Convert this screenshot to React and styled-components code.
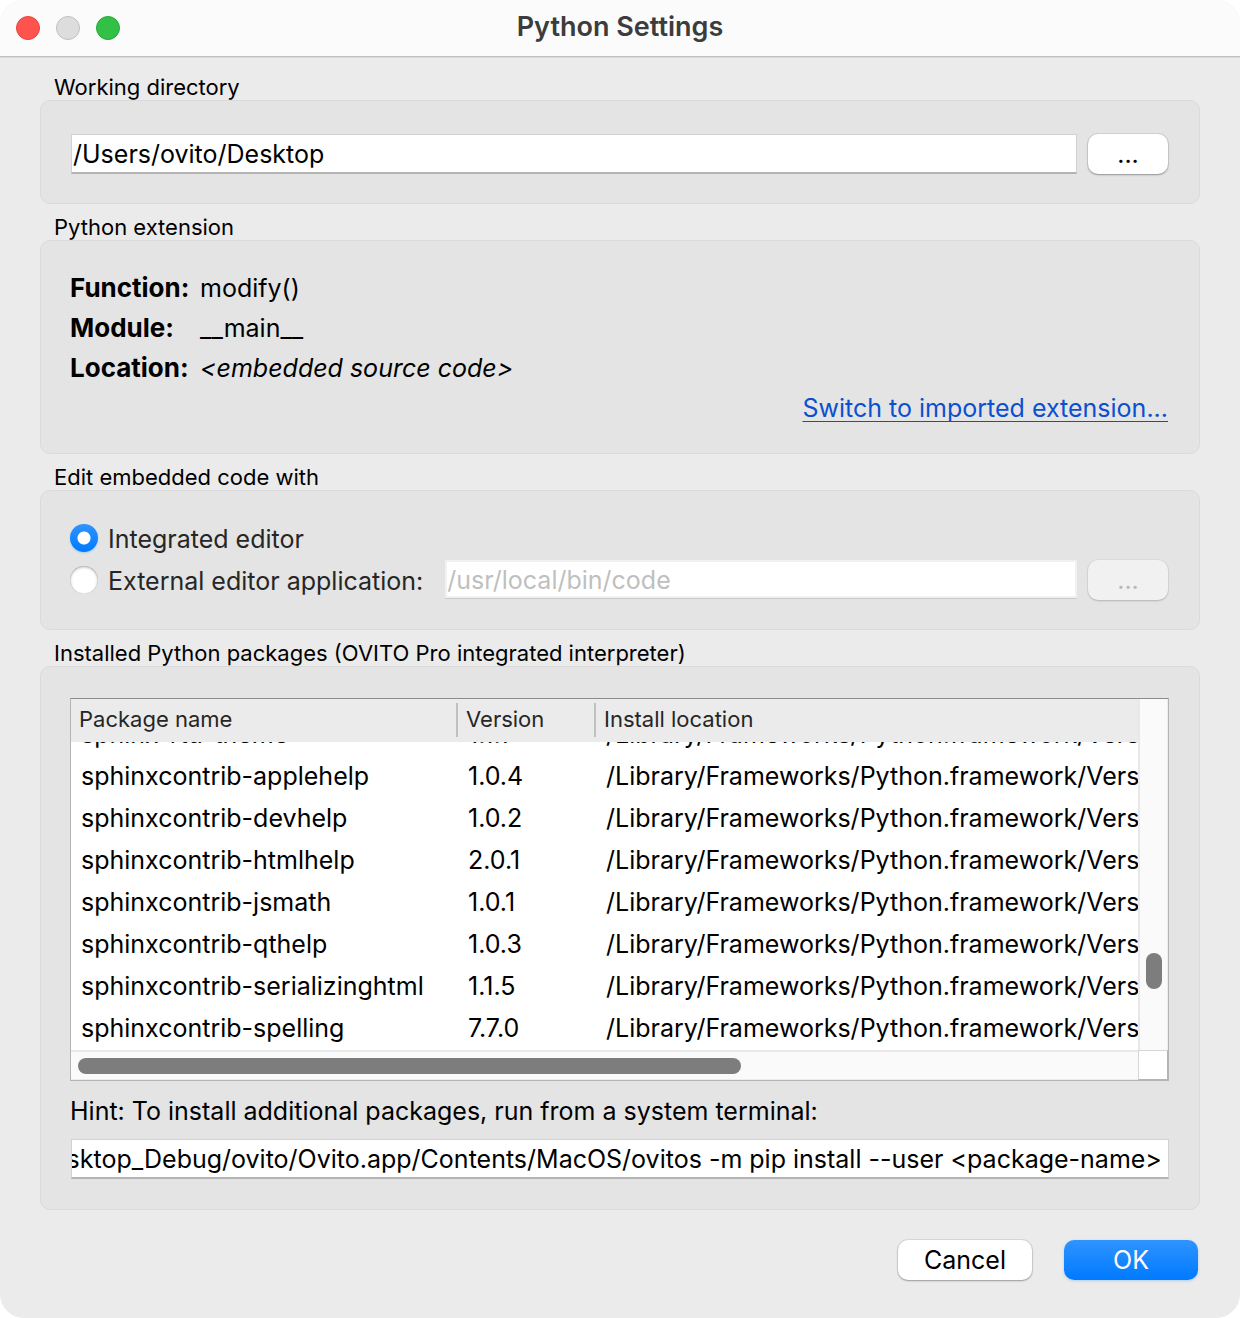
import React, { useLayoutEffect, useRef, useState } from "react";
import styled, { createGlobalStyle, css } from "styled-components";

const GlobalStyle = createGlobalStyle`
  *, *::before, *::after { box-sizing: border-box; }
  body {
    margin: 0;
    background: #ffffff;
    color: #000000;
    font-family: Inter, "Liberation Sans", sans-serif;
    font-size: 25px;
    line-height: 40px;
  }
  input, button { font: inherit; color: inherit; }
`;

const Window = styled.div`
  display: flex;
  flex-direction: column;
  min-height: 100vh;
  border-radius: 24px;
  overflow: hidden;
  background: #ebebeb;
`;

const TitleBar = styled.header`
  display: grid;
  grid-template-columns: 1fr auto 1fr;
  align-items: center;
  height: 58px;
  padding: 0 16px 2px;
  background: #fbfbfb;
  border-bottom: 1px solid #d9d9d9;
  box-shadow: inset 0 -1px 0 #c0c0c0;
`;

const Lights = styled.div`
  display: flex;
  gap: 16px;
`;

const Light = styled.button`
  width: 24px;
  height: 24px;
  padding: 0;
  border: 1px solid ${(p) => p.$edge};
  border-radius: 50%;
  background: ${(p) => p.$fill};
`;

const Title = styled.h1`
  margin: 0;
  padding-bottom: 2px;
  font-size: 27px;
  line-height: 32px;
  font-weight: 600;
  color: #3c3c3c;
`;

const Content = styled.form`
  display: flex;
  flex-direction: column;
  gap: 10px;
  padding: 16px 40px 38px;
`;

const Group = styled.section`
  display: flex;
  flex-direction: column;
`;

const GroupTitle = styled.h2`
  margin: 0;
  padding: 0 14px;
  font-size: 22px;
  line-height: 26px;
  font-weight: 400;
`;

const Panel = styled.div`
  display: flex;
  flex-direction: column;
  padding: ${(p) => p.$top}px ${(p) => p.$right || 31}px ${(p) => p.$bottom}px 29px;
  border: 1px solid #dadada;
  border-radius: 10px;
  background: #e4e4e4;
`;

const Row = styled.div`
  display: flex;
  align-items: center;
  gap: 11px;
  height: 40px;
  margin-top: ${(p) => p.$top || 0}px;
`;

const TextField = styled.input`
  flex: 1;
  min-width: 0;
  height: 40px;
  margin-left: 1px;
  padding: 0 2px 0 1px;
  border: 1px solid #d2d2d2;
  border-bottom: 2px solid #b4b4b4;
  border-radius: 0;
  outline: none;
  background: #ffffff;
  text-overflow: clip;
  ${(p) =>
    p.disabled &&
    css`
      height: 38px;
      margin-bottom: 2px;
      padding: 2px 0 0;
      border: 2px solid #f1f1f1;
      box-shadow: 0 1px 0 #c8c8c8;
      color: #bfbfbf;
    `}
`;

const CommandField = styled(TextField)`
  flex: none;
  padding: 0 6px 0 0;
`;

const PushButton = styled.button`
  flex: none;
  width: ${(p) => p.$width}px;
  height: 40px;
  padding: 0;
  border: 0;
  border-radius: 10px;
  background: ${(p) => (p.$primary ? "linear-gradient(#2f94ff, #007aff)" : "#ffffff")};
  color: ${(p) => (p.$primary ? "#ffffff" : "#000000")};
  box-shadow: ${(p) =>
    p.$primary
      ? "0 1px 3px rgba(0, 122, 255, 0.25)"
      : "0 0 0 1px rgba(0, 0, 0, 0.07), 0 1px 2px rgba(0, 0, 0, 0.3)"};
  line-height: 38px;
  &:disabled {
    background: #f1f1f1;
    color: #b9b9b9;
    box-shadow: 0 0 0 1px rgba(0, 0, 0, 0.03), 0 1px 2px rgba(0, 0, 0, 0.18);
  }
`;

const Facts = styled.dl`
  display: grid;
  grid-template-columns: 130px 1fr;
  margin: 0;
`;

const Term = styled.dt`
  font-size: 26px;
  font-weight: 700;
`;

const Value = styled.dd`
  margin: 0;
  font-style: ${(p) => (p.$italic ? "italic" : "normal")};
`;

const SwitchLink = styled.a`
  align-self: flex-end;
  color: #0a50d0;
  text-decoration: underline;
  text-decoration-thickness: 1px;
  text-underline-offset: 4px;
  text-decoration-skip-ink: none;
`;

const Radio = styled.input`
  appearance: none;
  flex: none;
  width: 28px;
  height: 28px;
  margin: 0;
  border-radius: 50%;
  background: #ffffff;
  box-shadow: inset 0 1px 3px rgba(0, 0, 0, 0.3), inset 0 0 1px rgba(0, 0, 0, 0.3);
  &:checked {
    background: radial-gradient(circle, #ffffff 6px, transparent 7px),
      linear-gradient(#2f94ff, #007aff);
    box-shadow: 0 1px 2px rgba(0, 122, 255, 0.25);
  }
`;

const RadioLabel = styled.label`
  display: flex;
  align-items: center;
  gap: 10px;
  margin-right: 10px;
  color: #262626;
  white-space: nowrap;
`;

const RadioText = styled.span`
  padding-top: 2px;
`;

const Browser = styled.div`
  display: grid;
  grid-template-columns: minmax(0, 1fr) 30px;
  grid-template-rows: 351px 30px;
  border: 1px solid #b4b4b4;
  border-top-color: #8c8c8c;
  background: #ffffff;
`;

const Viewport = styled.div`
  overflow: hidden;
`;

const Table = styled.table`
  width: 100%;
  table-layout: fixed;
  border-collapse: separate;
  border-spacing: 0;
`;

const Column = styled.col`
  width: ${(p) => p.$width};
`;

const HeadCell = styled.th`
  position: sticky;
  top: 0;
  height: 43px;
  padding: 0;
  background: #ebebeb;
  color: #262626;
  font-size: 22px;
  font-weight: 400;
  text-align: left;
`;

const HeadLabel = styled.div`
  height: 34px;
  margin-bottom: 2px;
  padding-left: 8px;
  border-right: ${(p) => (p.$last ? "none" : "2px solid #c0c0c0")};
  line-height: 32px;
`;

const Cell = styled.td`
  height: 42px;
  padding: 0 0 2px 10px;
  white-space: nowrap;
`;

const VerticalTrack = styled.div`
  display: flex;
  flex-direction: column;
  justify-content: flex-end;
  align-items: center;
  padding-bottom: 61px;
  border-left: 2px solid #e8e8e8;
  border-right: 1px solid #ededed;
  background: #fafafa;
`;

const HorizontalTrack = styled.div`
  display: flex;
  align-items: center;
  padding: 0 7px;
  border-top: 2px solid #e8e8e8;
  border-bottom: 1px solid #ededed;
  background: #fafafa;
`;

const Thumb = styled.div`
  width: ${(p) => p.$width};
  height: ${(p) => p.$height};
  border-radius: 8px;
  background: #7d7d7d;
`;

const Corner = styled.div`
  border-top: 1px solid #d6d6d6;
  border-left: 1px solid #d6d6d6;
  border-right: 1px solid #b4b4b4;
  border-bottom: 1px solid #b4b4b4;
`;

const Hint = styled.label`
  margin: 10px 0 8px;
`;

const Footer = styled.footer`
  display: flex;
  justify-content: flex-end;
  gap: 32px;
  padding: 20px 2px 0;
`;

const LOCATION = "/Library/Frameworks/Python.framework/Versions";

const PACKAGES = [
  ["sphinx-rtd-theme", "1.1.1"],
  ["sphinxcontrib-applehelp", "1.0.4"],
  ["sphinxcontrib-devhelp", "1.0.2"],
  ["sphinxcontrib-htmlhelp", "2.0.1"],
  ["sphinxcontrib-jsmath", "1.0.1"],
  ["sphinxcontrib-qthelp", "1.0.3"],
  ["sphinxcontrib-serializinghtml", "1.1.5"],
  ["sphinxcontrib-spelling", "7.7.0"],
];

function PackageList() {
  const viewport = useRef(null);

  // The list opens scrolled to its last package.
  useLayoutEffect(() => {
    viewport.current.scrollTop = viewport.current.scrollHeight;
  }, []);

  return (
    <Browser>
      <Viewport ref={viewport}>
        <Table>
          <colgroup>
            <Column $width="387px" />
            <Column $width="138px" />
            <Column $width="auto" />
          </colgroup>
          <thead>
            <tr>
              <HeadCell scope="col"><HeadLabel>Package name</HeadLabel></HeadCell>
              <HeadCell scope="col"><HeadLabel>Version</HeadLabel></HeadCell>
              <HeadCell scope="col"><HeadLabel $last>Install location</HeadLabel></HeadCell>
            </tr>
          </thead>
          <tbody>
            {PACKAGES.map(([name, version]) => (
              <tr key={name}>
                <Cell>{name}</Cell>
                <Cell>{version}</Cell>
                <Cell>{LOCATION}</Cell>
              </tr>
            ))}
          </tbody>
        </Table>
      </Viewport>
      <VerticalTrack><Thumb $width="16px" $height="36px" /></VerticalTrack>
      <HorizontalTrack><Thumb $width="63%" $height="16px" /></HorizontalTrack>
      <Corner />
    </Browser>
  );
}

export default function App() {
  const [directory, setDirectory] = useState("/Users/ovito/Desktop");
  const [editor, setEditor] = useState("integrated");
  const command = useRef(null);

  // Keep the end of the long command in view.
  useLayoutEffect(() => {
    command.current.scrollLeft = command.current.scrollWidth;
  }, []);

  return (
    <>
      <GlobalStyle />
      <Window>
        <TitleBar>
          <Lights>
            <Light aria-label="Close" $fill="#ff544d" $edge="#e5443e" />
            <Light aria-label="Minimize" $fill="#dddddd" $edge="#bfbfbf" />
            <Light aria-label="Zoom" $fill="#32c146" $edge="#26a838" />
          </Lights>
          <Title>Python Settings</Title>
        </TitleBar>
        <Content onSubmit={(e) => e.preventDefault()}>
          <Group>
            <GroupTitle as="label" htmlFor="directory">Working directory</GroupTitle>
            <Panel $top={33} $bottom={29}>
              <Row>
                <TextField
                  id="directory"
                  value={directory}
                  onChange={(e) => setDirectory(e.target.value)}
                />
                <PushButton type="button" $width={80}>...</PushButton>
              </Row>
            </Panel>
          </Group>

          <Group>
            <GroupTitle>Python extension</GroupTitle>
            <Panel $top={27} $bottom={25}>
              <Facts>
                <Term>Function:</Term>
                <Value>modify()</Value>
                <Term>Module:</Term>
                <Value>__main__</Value>
                <Term>Location:</Term>
                <Value $italic>&lt;embedded source code&gt;</Value>
              </Facts>
              <SwitchLink href="#">Switch to imported extension...</SwitchLink>
            </Panel>
          </Group>

          <Group>
            <GroupTitle>Edit embedded code with</GroupTitle>
            <Panel $top={27} $bottom={29}>
              <Row>
                <RadioLabel>
                  <Radio
                    type="radio"
                    name="editor"
                    checked={editor === "integrated"}
                    onChange={() => setEditor("integrated")}
                  />
                  <RadioText>Integrated editor</RadioText>
                </RadioLabel>
              </Row>
              <Row $top={2}>
                <RadioLabel>
                  <Radio
                    type="radio"
                    name="editor"
                    checked={editor === "external"}
                    onChange={() => setEditor("external")}
                  />
                  <RadioText>External editor application:</RadioText>
                </RadioLabel>
                <TextField
                  aria-label="External editor path"
                  defaultValue="/usr/local/bin/code"
                  disabled={editor !== "external"}
                />
                <PushButton type="button" $width={80} disabled={editor !== "external"}>...</PushButton>
              </Row>
            </Panel>
          </Group>

          <Group>
            <GroupTitle>Installed Python packages (OVITO Pro integrated interpreter)</GroupTitle>
            <Panel $top={31} $right={30} $bottom={30}>
              <PackageList />
              <Hint htmlFor="command">Hint: To install additional packages, run from a system terminal:</Hint>
              <CommandField
                id="command"
                ref={command}
                readOnly
                value="Desktop_Debug/ovito/Ovito.app/Contents/MacOS/ovitos -m pip install --user <package-name>"
              />
            </Panel>
          </Group>

          <Footer>
            <PushButton type="button" $width={134}>Cancel</PushButton>
            <PushButton type="submit" $width={134} $primary>OK</PushButton>
          </Footer>
        </Content>
      </Window>
    </>
  );
}
